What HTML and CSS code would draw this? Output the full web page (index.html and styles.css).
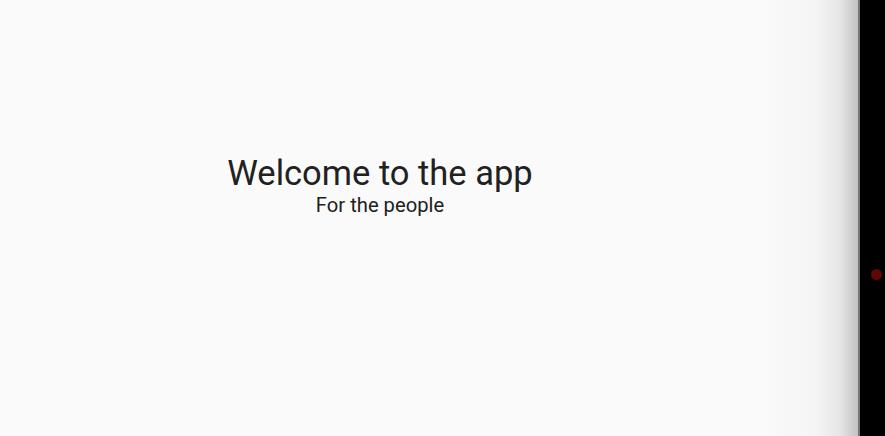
FILE: index.html
```html
<!DOCTYPE html>
<html>
<head>
<meta charset="utf-8">
<link rel="stylesheet" href="styles.css">
</head>
<body>
<div class="screen">
  <main class="panel">
    <div class="content">
      <h1 class="title">Welcome to the app</h1>
      <p class="subtitle">For the people</p>
    </div>
  </main>
  <div class="edge"></div>
  <aside class="side">
    <span class="dot"></span>
  </aside>
</div>
</body>
</html>
```
FILE: styles.css
```css
html, body {
  margin: 0;
  padding: 0;
  height: 100%;
  background: #000;
}
.screen {
  display: flex;
  width: 885px;
  height: 436px;
  font-family: Roboto, "Noto Sans", sans-serif;
}
.panel {
  width: 858px;
  flex: none;
  height: 100%;
  background: linear-gradient(to right, #fafafa 0, #fafafa 760px, #f5f5f5 815px, #e6e6e6 840px, #c4c4c4 857px);
}
.content {
  width: 760px;
  padding-top: 152px;
  display: flex;
  flex-direction: column;
  align-items: center;
  color: #212121;
}
.title {
  margin: 0;
  font-weight: 400;
  font-size: 34.5px;
  line-height: 42px;
}
.subtitle {
  margin: 0;
  font-size: 20.2px;
  line-height: 24px;
  margin-top: -1px;
}
.edge {
  width: 2px;
  flex: none;
  background: #777;
}
.side {
  flex: 1;
  display: flex;
  align-items: center;
  justify-content: flex-end;
  padding-right: 3px;
  padding-top: 112px;
  box-sizing: border-box;
}
.dot {
  width: 11px;
  height: 11px;
  border-radius: 50%;
  background: #5e0703;
}
```
